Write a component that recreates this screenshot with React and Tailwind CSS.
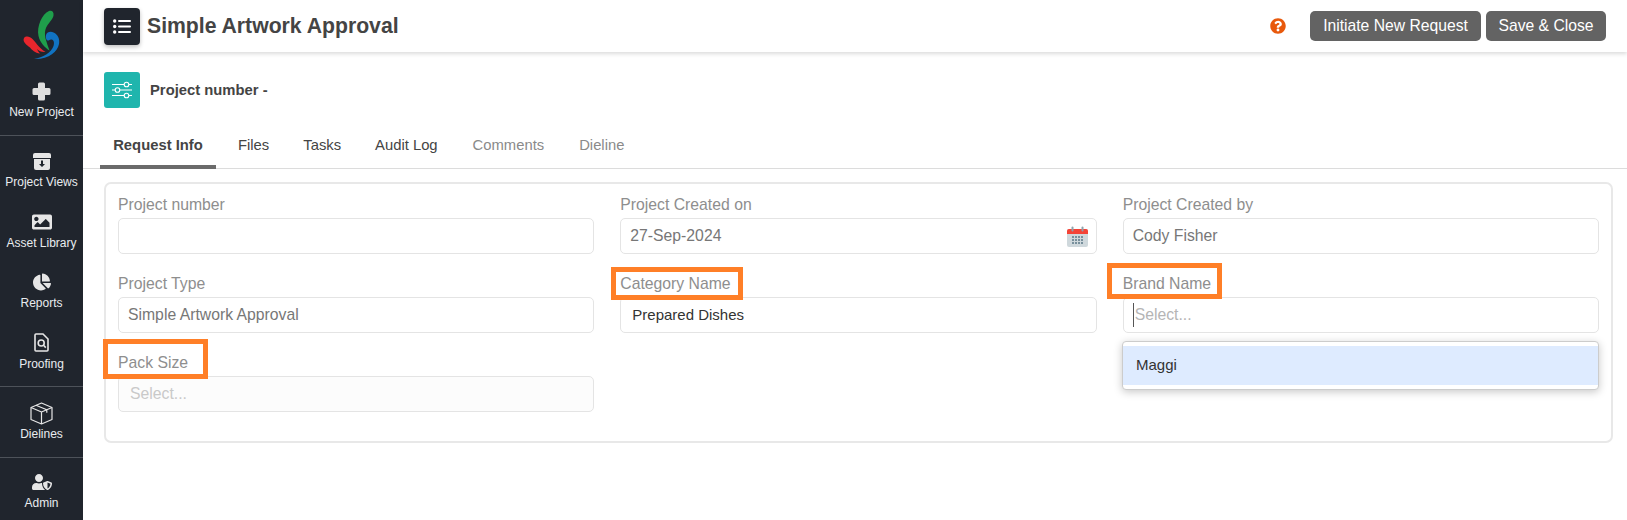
import React from "react";
import { FaChartPie, FaUserShield, FaQuestionCircle, FaImage } from "react-icons/fa";

const font = "font-['Liberation_Sans',Arial,sans-serif]";

function Logo() {
  return (
    <svg width="42" height="52" viewBox="0 0 42 52" className="block">
      <path d="M28 2C31 1 33 3 32.500 6.500C32 10 28.500 13 26 17C23.500 21 23.500 26 25 31C25.800 34 27 37.500 28.500 41.500C24 39 19 33.500 17.500 27C15.500 17.500 21 5 28 2Z" fill="#1f9e4b" />
      <path d="M3 29C5 26.500 9 27.500 11.500 30C14.500 33 17 38 24.500 43C21 43.500 18 42 16 40C16.500 41.500 17.500 43 19 44.500C14 44 11 41 9 38.500C6.500 36.500 1 33 3 29Z" fill="#e8262d" />
      <path d="M25 26C26 23 29.500 22 32.500 23.500C37 25.500 39 30 38 35C36.500 42.500 28 50.500 13 50C22 48.500 30 44 32.500 37C33.500 34 33 31 30.500 30.500C28.500 30.200 28 32 26.500 31.500C25 30.800 24.500 28 25 26Z" fill="#1173c1" />
    </svg>
  );
}

function NavItem({ icon, label }) {
  return (
    <div className="flex flex-col items-center">
      <div className="h-[26px] flex items-center justify-center text-[#e6e6e6]">{icon}</div>
      <div className="text-[12px] leading-[16px] text-[#e9ecef]">{label}</div>
    </div>
  );
}

function Field({ label, value, tone = "text-[#777]", size = "text-[15.75px]", children, disabled, indent = "pl-[9px]" }) {
  return (
    <div>
      <div className="h-[20px] mb-[3px] text-[15.75px] leading-[20px] text-[#8e8e8e]">{label}</div>
      <div className={`h-[36px] border border-[#e4e4e4] rounded-[5px] flex items-center justify-between ${size} ${indent} pr-[8px] ${tone} ${disabled ? "bg-[#fcfcfc]" : "bg-white"}`}>
        {value}
        {children}
      </div>
    </div>
  );
}

function Calendar() {
  return (
    <svg width="21" height="21" viewBox="0 0 21 21">
      <rect x="0" y="3" width="21" height="18" rx="2" fill="#cfd8dc" />
      <path d="M0 8V5a2 2 0 0 1 2-2h17a2 2 0 0 1 2 2v3Z" fill="#f44336" />
      <rect x="4.500" y="0.500" width="2" height="5" rx="1" fill="#90a4ae" />
      <rect x="14.500" y="0.500" width="2" height="5" rx="1" fill="#90a4ae" />
      <g fill="#78909c">
        {[5, 8, 11, 14].map((x) => [10, 13, 16].map((y) => <rect key={x + "-" + y} x={x} y={y} width="2" height="2" />))}
      </g>
    </svg>
  );
}

export default function App() {
  return (
    <div className={`${font} flex w-[1627px] h-[520px] overflow-hidden bg-white`}>
      <aside className="w-[83px] shrink-0 bg-[#20252d] flex flex-col">
        <div className="flex justify-center pt-[9px] h-[78px]"><Logo /></div>
        <div className="h-[57px]">
          <NavItem label="New Project" icon={
            <svg width="19" height="19" viewBox="0 0 19 19"><path d="M6 2a1.500 1.500 0 0 1 1.500-1.500h4A1.500 1.500 0 0 1 13 2v4h4a1.500 1.500 0 0 1 1.500 1.500v4A1.500 1.500 0 0 1 17 13h-4v4a1.500 1.500 0 0 1-1.500 1.500h-4A1.500 1.500 0 0 1 6 17v-4H2A1.500 1.500 0 0 1 .5 11.500v-4A1.500 1.500 0 0 1 2 6h4Z" fill="#dedede" /></svg>
          } />
        </div>
        <div className="h-px bg-[#4d5259]" />
        <div className="flex flex-col gap-[18.500px] pt-[12px] h-[250px]">
          <NavItem label="Project Views" icon={
            <svg width="18" height="17" viewBox="0 0 18 17"><path d="M2 0h14a2 2 0 0 1 2 2v3H0V2a2 2 0 0 1 2-2Z" fill="#e6e6e6" /><path d="M1 6h16v9a2 2 0 0 1-2 2H3a2 2 0 0 1-2-2Z" fill="#e6e6e6" /><path d="M8 7.500h2v3.500h2l-3 3-3-3h2Z" fill="#20252d" /></svg>
          } />
          <NavItem label="Asset Library" icon={<FaImage size={20} color="#e6e6e6" />} />
          <NavItem label="Reports" icon={<FaChartPie size={18} color="#e6e6e6" />} />
          <NavItem label="Proofing" icon={
            <svg width="15" height="19" viewBox="0 0 15 19" fill="none" stroke="#e6e6e6" strokeWidth="1.600"><path d="M1 2a1 1 0 0 1 1-1h7l5 5v11a1 1 0 0 1-1 1H2a1 1 0 0 1-1-1Z" /><circle cx="7.200" cy="10" r="3" /><path d="M9.500 12.300l2.300 2.300" /></svg>
          } />
        </div>
        <div className="h-px bg-[#4d5259]" />
        <div className="h-[70px] pt-[13px]">
          <NavItem label="Dielines" icon={
            <svg width="23" height="23" viewBox="0 0 23 23" fill="none" stroke="#e6e6e6" strokeWidth="1.200" strokeLinejoin="round"><path d="M11.500 1 22 5.500v12L11.500 22 1 17.500v-12Z" /><path d="M1 5.500 11.500 10 22 5.500M11.500 10v12M6 3.200 16.800 7.800v3" /></svg>
          } />
        </div>
        <div className="h-px bg-[#4d5259]" />
        <div className="pt-[11px]">
          <NavItem label="Admin" icon={<FaUserShield size={20} color="#e6e6e6" />} />
        </div>
      </aside>

      <main className="flex-1 min-w-0 flex flex-col relative">
        <header className="h-[52px] shrink-0 flex items-center pl-[21px] pr-[21px] shadow-[0_2px_4px_rgba(0,0,0,0.14)]">
          <div className="w-[36px] h-[37px] rounded-[4px] bg-[#20252d] flex items-center justify-center shadow-[0_2px_4px_rgba(0,0,0,0.25)]">
            <svg width="18" height="15" viewBox="0 0 18 15" fill="#fff"><circle cx="1.700" cy="2" r="1.700" /><circle cx="1.700" cy="7.500" r="1.700" /><circle cx="1.700" cy="13" r="1.700" /><rect x="5" y="1" width="13" height="2" rx="1" /><rect x="5" y="6.500" width="13" height="2" rx="1" /><rect x="5" y="12" width="13" height="2" rx="1" /></svg>
          </div>
          <h1 className="ml-[7px] text-[21.200px] font-bold text-[#444]">Simple Artwork Approval</h1>
          <div className="ml-auto flex items-center">
            <FaQuestionCircle size={16} color="#e8590c" />
            <button className="ml-[24px] w-[171px] h-[30px] rounded-[5px] bg-[#636363] text-white text-[15.700px]">Initiate New Request</button>
            <button className="ml-[5px] w-[120px] h-[30px] rounded-[5px] bg-[#636363] text-white text-[15.700px]">Save &amp; Close</button>
          </div>
        </header>

        <div className="h-[36px] mt-[20px] ml-[21px] flex items-center">
          <div className="w-[36px] h-[36px] rounded-[3px] bg-[#1fb5ad] flex items-center justify-center">
            <svg width="20" height="18" viewBox="0 0 20 18" fill="none" stroke="#fff" strokeWidth="1.100"><path d="M0 3.500h12M17 3.500h3M0 9h3M8 9h12M0 14.500h12M17 14.500h3" /><circle cx="14.500" cy="3.500" r="2.300" /><circle cx="5.500" cy="9" r="2.300" /><circle cx="14.500" cy="14.500" r="2.300" /></svg>
          </div>
          <div className="ml-[10px] text-[14.800px] font-bold text-[#444]">Project number -</div>
        </div>

        <nav className="h-[61px] border-b border-[#dcdcdc] flex ml-0 pl-[17px] text-[14.800px]">
          <div className="h-[61px] w-[116px] pt-[26px] text-center font-bold text-[#444] border-b-[4px] border-[#6b6b6b]">Request Info</div>
          <div className="pt-[26px] ml-[22px] text-[#444]">Files</div>
          <div className="pt-[26px] ml-[34px] text-[#444]">Tasks</div>
          <div className="pt-[26px] ml-[34px] text-[#444]">Audit Log</div>
          <div className="pt-[26px] ml-[35px] text-[#8a8a8a]">Comments</div>
          <div className="pt-[26px] ml-[35px] text-[#8a8a8a]">Dieline</div>
        </nav>

        <section className="relative mt-[13px] ml-[21px] w-[1509px] h-[261px] border-2 border-[#e8e8e8] rounded-[7px] pt-[11px] pl-[12px] pr-[12px]">
          <div className="grid grid-cols-3 gap-x-[26px] gap-y-[20px]">
            <Field label="Project number" />
            <Field label="Project Created on" value="27-Sep-2024"><Calendar /></Field>
            <Field label="Project Created by" value="Cody Fisher" />
            <Field label="Project Type" value="Simple Artwork Approval" />
            <Field label="Category Name" value="Prepared Dishes" tone="text-[#333]" size="text-[15px]" indent="pl-[11px]" />
            <Field label="Brand Name" value={<span className="border-l border-[#555] pl-[1px] text-[#b5b5b5]">Select...</span>} />
            <Field label="Pack Size" value={<span className="text-[#c9c9c9]">Select...</span>} disabled indent="pl-[11px]" />
          </div>

          <div className="absolute left-[1016px] top-[157px] w-[477px] h-[49px] bg-white border border-[#ccc] rounded-[4px] shadow-[0_2px_8px_rgba(0,0,0,0.22)] py-[4px]">
            <div className="h-[39px] bg-[#deebff] flex items-center pl-[13px] text-[15px] text-[#333]">Maggi</div>
          </div>

          <div className="absolute left-[-3px] top-[155px] w-[105px] h-[40px] border-[5px] border-[#ff7f27]" />
          <div className="absolute left-[505px] top-[83px] w-[132px] h-[33px] border-[5px] border-[#ff7f27]" />
          <div className="absolute left-[1001px] top-[79px] w-[115px] h-[36px] border-[5px] border-[#ff7f27]" />
        </section>
      </main>
    </div>
  );
}
